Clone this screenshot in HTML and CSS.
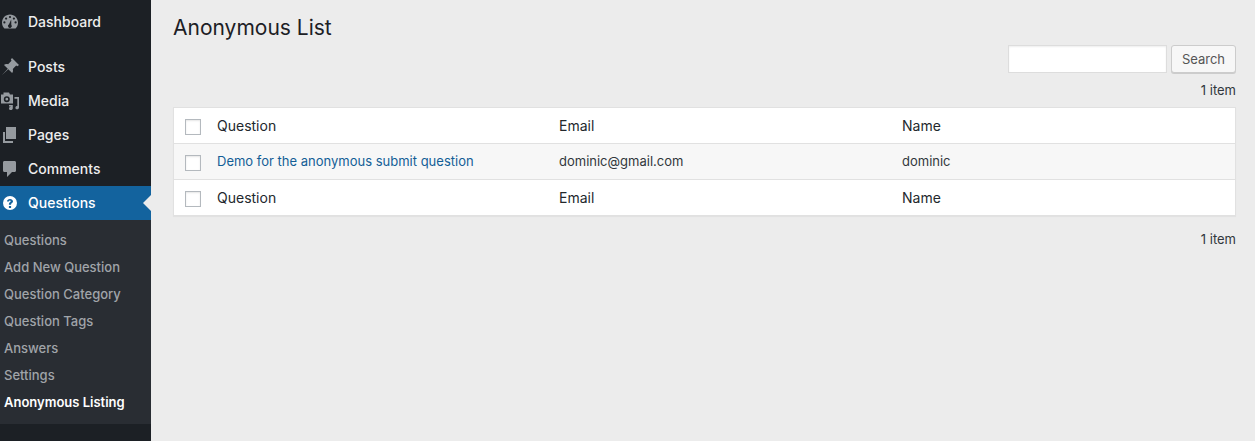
FILE: index.html
```html
<!DOCTYPE html>
<html lang="en">
<head>
  <meta charset="UTF-8">
  <title>Anonymous List</title>
  <link rel="stylesheet" href="styles.css">
</head>
<body>

<div class="layout">
  <nav class="sidebar">
    <ul class="menu">
      <li class="menu-item menu-first">
        <svg class="menu-icon" viewBox="0 0 20 20"><path d="M4.400 16.500C2.900 15 2 13 2 10.500 2 6.100 5.600 2.500 10 2.500s8 3.600 8 8c0 2.500-.9 4.500-2.400 6zM10 3.900a1.100 1.100 0 1 0 0 2.200 1.100 1.100 0 0 0 0-2.200zM6.100 5.500a1.100 1.100 0 1 0 0 2.200 1.100 1.100 0 0 0 0-2.200zm7.800 0a1.100 1.100 0 1 0 0 2.200 1.100 1.100 0 0 0 0-2.200zM4.400 9.300a1.100 1.100 0 1 0 0 2.200 1.100 1.100 0 0 0 0-2.200zm11.200 0a1.100 1.100 0 1 0 0 2.200 1.100 1.100 0 0 0 0-2.200zM11.200 7.500L9 12.300a1.900 1.900 0 1 0 2.300.4z" fill-rule="evenodd"/></svg>
        Dashboard
      </li>
      <li class="menu-item menu-gap">
        <svg class="menu-icon" viewBox="0 0 20 20"><path d="M12 1l7 7-1.600 1.200-1.200-.7-3.400 3.400c.5 1.700.2 3.100-.7 4.100L8.300 12.200 2 18l5.800-6.300-3.800-3.800c1-.9 2.400-1.200 4.100-.7l3.400-3.400-.7-1.200z"/></svg>
        Posts
      </li>
      <li class="menu-item">
        <svg class="menu-icon" viewBox="0 0 20 20"><path d="M1 3.500h2.500V1.500h5.500l1 2h3v9H1zm5.800 1.700a3 3 0 1 0 0 6 3 3 0 0 0 0-6zm0 1.600a1.400 1.400 0 1 1 0 2.800 1.400 1.400 0 0 1 0-2.800zM14.500 6H19v10.500c0 1-.8 1.800-1.800 1.800s-1.800-.7-1.800-1.600.8-1.600 1.900-1.600v-7.300h-2.800zM9 14h3.800v3.200c0 1-.8 1.800-1.900 1.800-1.100 0-1.900-.7-1.900-1.600 0-.9.800-1.600 2-1.600V15.500H9z" fill-rule="evenodd"/></svg>
        Media
      </li>
      <li class="menu-item">
        <svg class="menu-icon" viewBox="0 0 20 20"><path d="M6 2h10v12H6zM3 7h2v9h8v2H3z"/></svg>
        Pages
      </li>
      <li class="menu-item">
        <svg class="menu-icon" viewBox="0 0 20 20"><path d="M4.500 2h10c.9 0 1.500.7 1.500 1.500v8c0 .9-.6 1.500-1.500 1.500h-2.500L7 18v-5H4.500C3.600 13 3 12.400 3 11.500v-8C3 2.700 3.600 2 4.500 2z"/></svg>
        Comments
      </li>
      <li class="menu-item menu-current">
        <svg class="menu-icon" viewBox="0 0 20 20"><path d="M10 3a7 7 0 1 0 0 14 7 7 0 0 0 0-14zm1.100 12H8.900v-2h2.200zm1.800-6c-.3.600-.8.900-1.200 1.200-.5.300-.6.600-.6 1.100v.4H8.900v-.6c0-1 .5-1.500 1.100-1.900.4-.3.700-.5.700-.9 0-.5-.3-.7-.8-.7-.6 0-.9.400-.9 1H7c0-1.600 1.300-2.600 3-2.600 1.700 0 3 .9 3 2.400 0 .2 0 .4-.1.600z" fill-rule="evenodd"/></svg>
        Questions
      </li>
    </ul>
    <ul class="submenu">
      <li>Questions</li>
      <li>Add New Question</li>
      <li>Question Category</li>
      <li>Question Tags</li>
      <li>Answers</li>
      <li>Settings</li>
      <li class="submenu-current">Anonymous Listing</li>
    </ul>
  </nav>

  <main class="content">
    <h1>Anonymous List</h1>
    <form class="search-box">
      <input type="text" class="search-input">
      <button type="button" class="search-btn">Search</button>
    </form>
    <div class="item-count">1 item</div>
    <table class="list-table">
      <thead>
        <tr>
          <td class="check-col"><span class="check"></span></td>
          <th class="col-question">Question</th>
          <th class="col-email">Email</th>
          <th>Name</th>
        </tr>
      </thead>
      <tbody>
        <tr>
          <td class="check-col"><span class="check"></span></td>
          <td><a href="#">Demo for the anonymous submit question</a></td>
          <td>dominic@gmail.com</td>
          <td>dominic</td>
        </tr>
      </tbody>
      <tfoot>
        <tr>
          <td class="check-col"><span class="check"></span></td>
          <th>Question</th>
          <th>Email</th>
          <th>Name</th>
        </tr>
      </tfoot>
    </table>
    <div class="item-count item-count-bottom">1 item</div>
  </main>
</div>

</body>
</html>
```

FILE: styles.css
```css
html, body {
  margin: 0;
  height: 100%;
  overflow: hidden;
  background: #ececec;
  font-family: Inter, "Liberation Sans", sans-serif;
  font-size: 13px;
  color: #32373c;
}
.layout {
  display: flex;
  height: 441px;
}
.sidebar {
  width: 151px;
  flex-shrink: 0;
  background: #1c2025;
  color: #eee;
}
.menu, .submenu {
  list-style: none;
  margin: 0;
  padding: 0;
}
.menu-item {
  display: flex;
  align-items: center;
  gap: 8px;
  height: 34px;
  box-sizing: border-box;
  padding-bottom: 2px;
  font-size: 14px;
  font-weight: 500;
  position: relative;
}
.menu-first {
  margin-top: 5px;
}
.menu-gap {
  margin-top: 11px;
}
.menu-icon {
  width: 20px;
  height: 20px;
  margin-top: 2px;
  fill: #959a9f;
  flex-shrink: 0;
}
.menu-current {
  background: #13639e;
  color: #fff;
}
.menu-current .menu-icon {
  fill: #fff;
}
.menu-current::after {
  content: "";
  position: absolute;
  right: 0;
  top: 50%;
  margin-top: -8px;
  border: 8px solid transparent;
  border-left-width: 0;
  border-right-color: #ececec;
}
.submenu {
  background: #292d33;
  padding: 7px 0 8px;
}
.submenu li {
  height: 27px;
  line-height: 27px;
  padding-left: 4px;
  font-size: 13px;
  font-weight: 500;
  color: #a0a4a9;
}
.submenu .submenu-current {
  color: #fff;
  font-weight: 600;
}
.content {
  flex: 1;
  padding: 0 19px 0 22px;
  min-width: 0;
}
h1 {
  margin: 0;
  padding-top: 13px;
  font-size: 21px;
  line-height: 29px;
  font-weight: 400;
  color: #1c2025;
}
.search-box {
  display: flex;
  justify-content: flex-end;
  gap: 4px;
  margin-top: 3px;
}
.search-input {
  width: 159px;
  height: 28px;
  box-sizing: border-box;
  padding: 3px 5px;
  margin: 0;
  background: #fff;
  border: 1px solid #ddd;
  box-shadow: inset 0 1px 2px rgba(0, 0, 0, 0.07);
}
.search-btn {
  width: 65px;
  height: 28px;
  box-sizing: border-box;
  padding: 0;
  background: #f7f7f7;
  border: 1px solid #ccc;
  border-radius: 3px;
  box-shadow: 0 1px 0 #ccc;
  font: inherit;
  color: #555;
}
.item-count {
  text-align: right;
  margin-top: 9px;
  height: 16px;
  line-height: 16px;
}
.list-table {
  width: 100%;
  table-layout: fixed;
  border-collapse: collapse;
  margin-top: 9px;
  background: #fff;
  border: 1px solid #e1e1e1;
  box-shadow: 0 1px 1px rgba(0, 0, 0, 0.04);
}
.list-table th, .list-table td {
  padding: 0 8px 0 10px;
  height: 35px;
  text-align: left;
  font-weight: 400;
  color: #32373c;
}
.list-table th {
  font-size: 14px;
  color: #23282d;
}
.list-table tbody tr {
  background: #f7f7f7;
}
.list-table tbody td {
  height: 33px;
  padding-bottom: 2px;
  border-top: 1px solid #e1e1e1;
  border-bottom: 1px solid #e1e1e1;
}
.list-table a {
  color: #135e96;
  text-decoration: none;
}
.list-table .check-col {
  width: 16px;
  height: 33px;
  padding: 2px 6px 0 11px;
}
.list-table .col-question {
  width: 324px;
}
.list-table .col-email {
  width: 325px;
}
.check {
  display: block;
  width: 16px;
  height: 16px;
  box-sizing: border-box;
  background: #fff;
  border: 1px solid #b4b9be;
  box-shadow: inset 0 1px 2px rgba(0, 0, 0, 0.1);
}
.item-count-bottom {
  margin-top: 15px;
}
```
